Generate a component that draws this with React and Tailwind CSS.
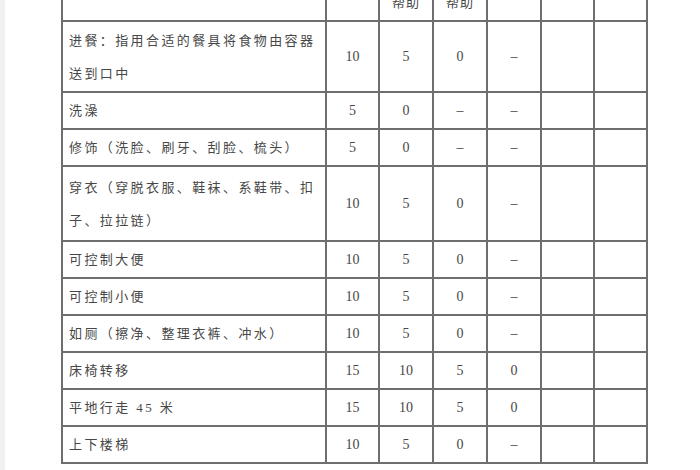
import React from "react";

const ROWS = [
  { name: ["进餐：指用合适的餐具将食物由容器", "送到口中"], v: ["10", "5", "0", "–"], h: "h-[71px]" },
  { name: ["洗澡"], v: ["5", "0", "–", "–"], h: "h-[37px]" },
  { name: ["修饰（洗脸、刷牙、刮脸、梳头）"], v: ["5", "0", "–", "–"], h: "h-[37px]" },
  { name: ["穿衣（穿脱衣服、鞋袜、系鞋带、扣", "子、拉拉链）"], v: ["10", "5", "0", "–"], h: "h-[75px]" },
  { name: ["可控制大便"], v: ["10", "5", "0", "–"], h: "h-[37px]" },
  { name: ["可控制小便"], v: ["10", "5", "0", "–"], h: "h-[37px]" },
  { name: ["如厕（擦净、整理衣裤、冲水）"], v: ["10", "5", "0", "–"], h: "h-[37px]" },
  { name: ["床椅转移"], v: ["15", "10", "5", "0"], h: "h-[37px]" },
  { name: ["平地行走 45 米"], v: ["15", "10", "5", "0"], h: "h-[37px]" },
  { name: ["上下楼梯"], v: ["10", "5", "0", "–"], h: "h-[37px]" },
];

const cell = "border-2 border-[#6e6e6e] p-0";

export default function App() {
  return (
    <div className="w-[700px] h-[470px] overflow-hidden bg-white flex">
      <div className="w-[5px] h-full bg-[#f1f1f1]" />
      <div className="pl-[56px] -mt-[22px]">
        <table
          className="table-fixed border-collapse text-[#474747] text-[13px]"
          style={{ fontFamily: '"Liberation Serif", "Noto Sans CJK SC", serif' }}
        >
          <colgroup>
            <col className="w-[264px]" />
            <col className="w-[53px]" />
            <col className="w-[54px]" />
            <col className="w-[54px]" />
            <col className="w-[54px]" />
            <col className="w-[53px]" />
            <col className="w-[53px]" />
          </colgroup>
          <tbody>
            <tr className="h-[42px]">
              <td className={cell} />
              <td className={cell} />
              <td className={cell + " text-center align-top leading-[18px] tracking-[1px]"}>
                <div className="-mt-[4px]">需部分<br />帮助</div>
              </td>
              <td className={cell + " text-center align-top leading-[18px] tracking-[1px]"}>
                <div className="-mt-[4px]">需极大<br />帮助</div>
              </td>
              <td className={cell} />
              <td className={cell} />
              <td className={cell} />
            </tr>
            {ROWS.map((r, i) => (
              <tr key={i} className={r.h}>
                <td className={cell + " pl-[6px] tracking-[2.4px] leading-[33px]"}>
                  {r.name.map((l, j) => (
                    <div key={j} className="whitespace-nowrap">{l}</div>
                  ))}
                </td>
                {r.v.map((x, j) => (
                  <td key={j} className={cell + " text-center text-[14px]"}>
                    {x}
                  </td>
                ))}
                <td className={cell} />
                <td className={cell} />
              </tr>
            ))}
          </tbody>
        </table>
      </div>
    </div>
  );
}
